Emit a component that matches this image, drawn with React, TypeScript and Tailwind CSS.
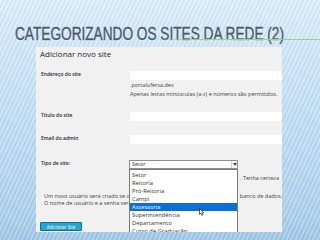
const DROPDOWN_ITEMS = [
  'Setor',
  'Reitoria',
  'Pró-Reitoria',
  'Campi',
  'Assessoria',
  'Superintendência',
  'Departamento',
  'Curso de Graduação',
]

function Field({ label, children }: { label: string; children?: React.ReactNode }) {
  return (
    <div className="flex">
      <div className="w-[94px] pl-[5px] text-[5px] leading-[7px] font-semibold text-[#23282d]">{label}</div>
      <div className="flex-1">
        <div className="h-[9px] bg-white" />
        {children}
      </div>
    </div>
  )
}

export default function App() {
  return (
    <div
      className="w-[320px] h-[240px] overflow-hidden relative bg-[image:repeating-linear-gradient(115deg,rgba(255,255,255,0.22)_0px,rgba(255,255,255,0.22)_2px,rgba(120,170,215,0.10)_2px,rgba(120,170,215,0.10)_4px),linear-gradient(180deg,#dceefa_0%,#cfe6f7_20%,#bcdaf1_55%,#a9cde9_90%,#9cc3e3_100%)]"
      style={{ fontFamily: '"Open Sans", "Noto Sans", sans-serif' }}
    >
      {/* slide title */}
      <div className="relative pt-[22px] pl-[15px] h-[47px]">
        <div
          className="inline-block origin-left scale-x-[0.78] whitespace-nowrap text-[17.5px] leading-[20px] text-[#4b5866] [-webkit-text-stroke:0.35px_#4b5866] [text-shadow:0_1px_1px_rgba(255,255,255,0.6)]"
          style={{ fontFamily: '"Liberation Sans", Arial, sans-serif' }}
        >
          CATEGORIZANDO OS SITES DA REDE (2)
        </div>
        <div className="absolute left-[150px] right-0 top-[39px] h-[1px] bg-[linear-gradient(90deg,rgba(143,208,122,0)_0%,#9ad384_30%,#9ad384_100%)]" />
      </div>

      {/* wordpress screenshot */}
      <div className="relative ml-[36px] w-[246px] h-[185px] bg-[#f1f1f1] overflow-hidden">
        <div className="h-[24px] pt-[2px] pl-[4px] text-[8px] leading-[10px] text-[#23282d]">Adicionar novo site</div>

        <Field label="Endereço do site">
          <div className="mt-[1px] text-[5.5px] leading-[8px] text-[#444]">.portalufersa.dev</div>
          <div className="mt-[1px] text-[5.5px] leading-[8px] text-[#444] whitespace-nowrap">
            Apenas letras minúsculas (a-z) e números são permitidos.
          </div>
        </Field>
        <div className="mt-[14px]">
          <Field label="Título do site" />
        </div>
        <div className="mt-[14px]">
          <Field label="Email do admin" />
        </div>

        <div className="mt-[16px] flex">
          <div className="w-[94px] pl-[5px] text-[5px] leading-[7px] font-semibold text-[#23282d]">Tipo de site:</div>
          <div className="flex-1">
            <div className="-ml-[1px] w-[109px] h-[9px] bg-white border border-[#8e8e8e] flex items-center justify-between">
              <span className="pl-[2px] text-[5.5px] leading-[7px] text-[#333]">Setor</span>
              <span className="w-[6px] h-[7px] flex items-center justify-center border-l border-[#d0d0d0]">
                <svg width="4" height="3" viewBox="0 0 4 3">
                  <path d="M0 0h4L2 3z" fill="#444" />
                </svg>
              </span>
            </div>
          </div>
        </div>

        {/* only the tail of this line shows beside the open list */}
        <div className="mt-[5px] ml-[203px] pr-[3px] flex justify-end text-[5.5px] leading-[8px] text-[#444] whitespace-nowrap overflow-hidden">
          . Tenha certeza
        </div>

        <div className="mt-[11px] pl-[8px] text-[5.5px] leading-[7px] text-[#444]">
          <div className="flex justify-between whitespace-nowrap">
            <span className="w-[85px] overflow-hidden">Um novo usuário será criado se o e-mail</span>
            <span>banco de dados.</span>
          </div>
          <div className="w-[85px] overflow-hidden whitespace-nowrap">O nome de usuário e a senha serão</div>
        </div>

        <div className="mt-[15px] ml-[4px] w-[42px] h-[9px] bg-[#2ea2cc] border border-[#0074a2] rounded-[1px] flex items-center justify-center text-[4.5px] leading-[6px] text-white">
          Adicionar Site
        </div>

        {/* open select list */}
        <div className="absolute left-[93px] top-[122px] w-[109px] bg-white border border-[#7a7a7a] py-[1px]">
          {DROPDOWN_ITEMS.map(item => (
            <div
              key={item}
              className={`h-[8px] pl-[2px] text-[5.8px] leading-[8px] whitespace-nowrap ${
                item === 'Assessoria' ? 'bg-[#0a6fd6] text-white' : 'text-[#333]'
              }`}
            >
              {item}
            </div>
          ))}
        </div>

        {/* mouse pointer */}
        <svg className="absolute left-[163px] top-[161px]" width="5" height="8" viewBox="0 0 5 8">
          <path d="M0.5 0.5v6l1.4-1.3 1 2.2 1-.5-1-2.1h1.8z" fill="#fff" stroke="#000" strokeWidth="0.6" />
        </svg>
      </div>
    </div>
  )
}
